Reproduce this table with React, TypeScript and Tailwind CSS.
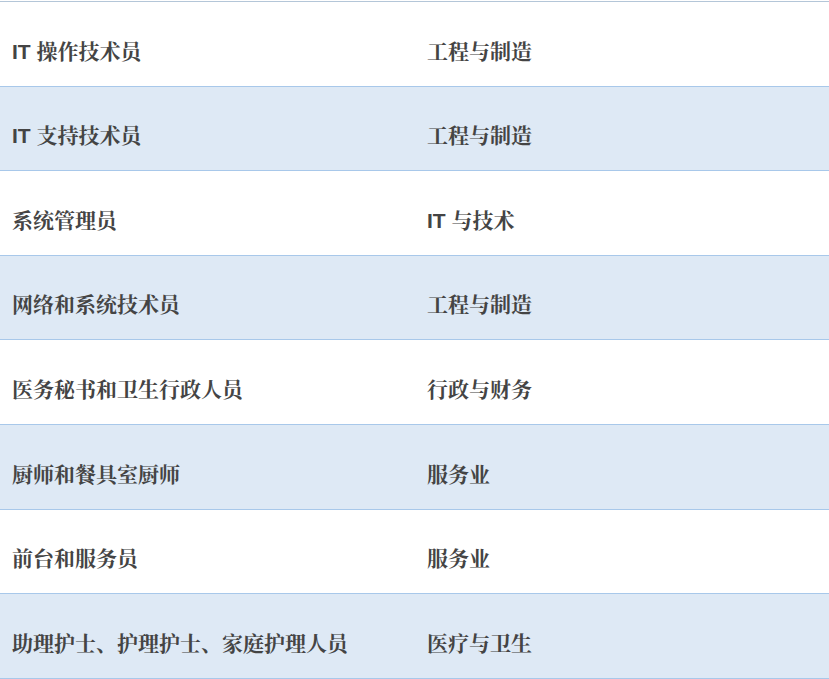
const rows: [string, string][] = [
  ['IT 操作技术员', '工程与制造'],
  ['IT 支持技术员', '工程与制造'],
  ['系统管理员', 'IT 与技术'],
  ['网络和系统技术员', '工程与制造'],
  ['医务秘书和卫生行政人员', '行政与财务'],
  ['厨师和餐具室厨师', '服务业'],
  ['前台和服务员', '服务业'],
  ['助理护士、护理护士、家庭护理人员', '医疗与卫生'],
]

export default function App() {
  return (
    <div
      className="min-h-screen bg-white pt-px text-[21px] font-bold text-[#444444]"
      style={{ fontFamily: '"Liberation Sans", "Noto Serif CJK SC", "Noto Sans CJK SC", sans-serif' }}
    >
      <div className="border-t border-[#b4c6d8]">
        {rows.map(([job, sector], i) => (
          <div
            key={i}
            className={`grid h-[84.6px] grid-cols-[415px_1fr] items-center border-b border-[#a8c8ea] pt-[15px] ${
              i % 2 === 1 ? 'bg-[#dee9f5]' : 'bg-white'
            }`}
          >
            <div className="pl-[12px]">{job}</div>
            <div className="pl-[12px]">{sector}</div>
          </div>
        ))}
      </div>
    </div>
  )
}
